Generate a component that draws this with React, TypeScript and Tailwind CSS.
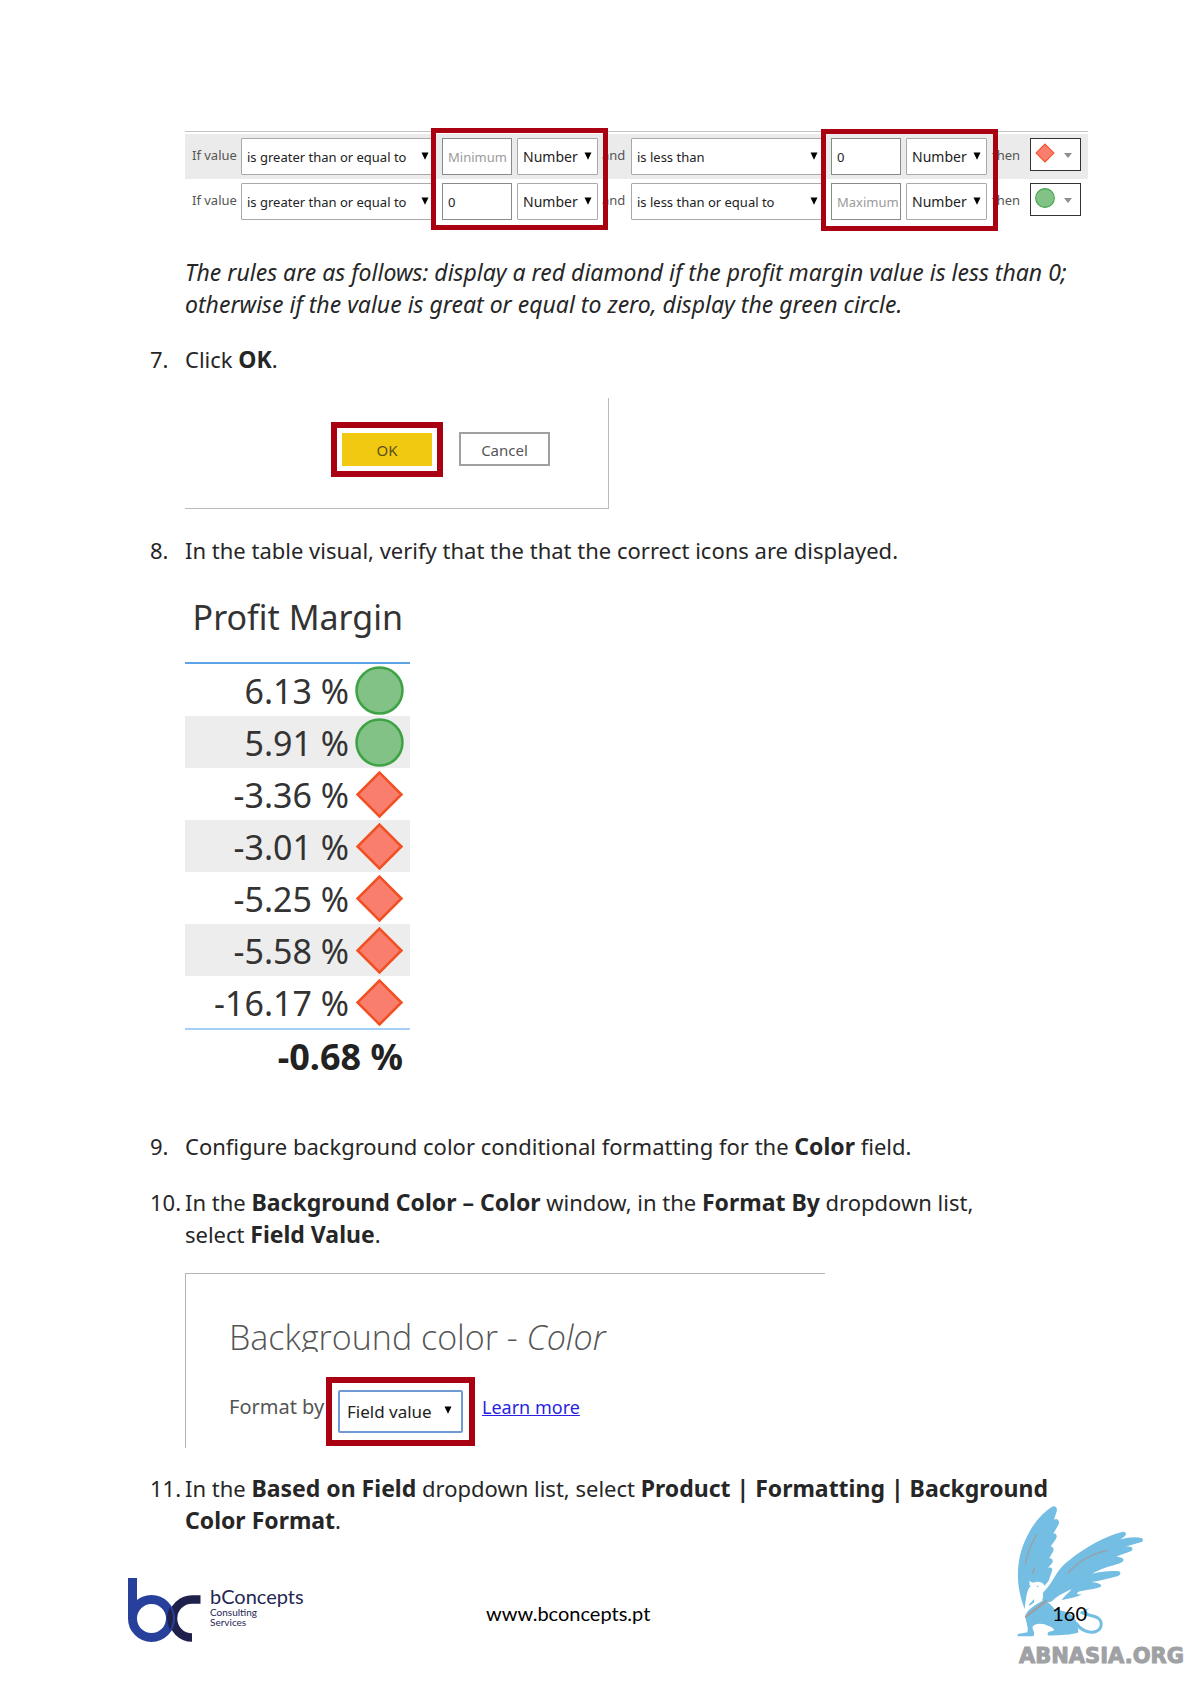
import React from "react";

const bodyFont = "font-['Noto_Sans','Open_Sans',sans-serif]";

function Arrow({ className }: { className: string }) {
  return (
    <svg viewBox="0 0 8 8" className={`pointer-events-none absolute h-2 w-2 ${className}`} aria-hidden="true">
      <path d="M0.5 0.5H7.5L4 7.8Z" fill="currentColor" />
    </svg>
  );
}

function Diamond({ className }: { className: string }) {
  return (
    <svg viewBox="0 0 48 48" className={className} aria-hidden="true">
      <path d="M24 2.5L45.5 24L24 45.5L2.5 24Z" fill="#fa7e6e" stroke="#f25022" strokeWidth="2.5" />
    </svg>
  );
}

function Circle({ className }: { className: string }) {
  return (
    <svg viewBox="0 0 48 48" className={className} aria-hidden="true">
      <circle cx="24" cy="24" r="22.5" fill="#82c287" stroke="#3fa346" strokeWidth="2.5" />
    </svg>
  );
}

function Picker({ label, value, className }: { label: string; value: string; className: string }) {
  return (
    <div className={`relative h-[37px] shrink-0 ${className}`}>
      <select
        aria-label={label}
        className="h-full w-full appearance-none rounded-[1px] border border-[#a9a9a9] bg-white pl-[5px] text-[#222]"
      >
        <option>{value}</option>
      </select>
      <Arrow className="top-[14px] right-[6px] text-black" />
    </div>
  );
}

type RuleProps = {
  low: string;
  high: string;
  upper: string;
  shade: string;
  icon: "diamond" | "circle";
};

function Rule({ low, high, upper, shade, icon }: RuleProps) {
  const box =
    "h-[37px] w-[70px] shrink-0 border border-[#8a8a8a] bg-white pl-[5px] text-[13px] text-[#222] placeholder:text-[#9a9a9a]";
  return (
    <div className={`flex h-[45px] items-start pt-1 pl-[7px] text-[13px] leading-8 text-[#555] ${shade}`}>
      <span className="w-[49px] shrink-0 pt-px whitespace-nowrap">If value</span>
      <Picker label="Lower comparison" value="is greater than or equal to" className="w-[194px]" />
      <input aria-label="Lower value" placeholder="Minimum" defaultValue={low} className={`ml-[7px] ${box}`} />
      <Picker label="Lower type" value="Number" className="ml-[5px] w-[81px] text-sm" />
      <span className="w-[33px] shrink-0 pt-px pl-1">and</span>
      <Picker label="Upper comparison" value={upper} className="w-[193px]" />
      <input aria-label="Upper value" placeholder="Maximum" defaultValue={high} className={`ml-[7px] ${box}`} />
      <Picker label="Upper type" value="Number" className="ml-[5px] w-[81px] text-sm" />
      <span className="w-[43px] shrink-0 pt-px pl-[5px]">then</span>
      <button
        aria-label={`Icon: ${icon}`}
        className="relative flex h-[33px] w-[51px] shrink-0 items-start border border-[#333] bg-white pt-1 pl-1"
      >
        {icon === "diamond" ? <Diamond className="h-5 w-5" /> : <Circle className="h-5 w-5" />}
        <svg viewBox="0 0 8 5" className="absolute top-[14px] right-2 h-[5px] w-2" aria-hidden="true">
          <path d="M0 0H8L4 5Z" fill="#8f8f8f" />
        </svg>
      </button>
    </div>
  );
}

function B({ children }: { children: React.ReactNode }) {
  return <b className="text-[23px]">{children}</b>;
}

function Step({ n, children }: { n: number; children: React.ReactNode }) {
  return (
    <div className="-ml-[35px] flex">
      <span className="w-[35px] shrink-0 whitespace-nowrap">{n}.</span>
      <p className="min-w-0">{children}</p>
    </div>
  );
}

const margins: { value: string; up: boolean }[] = [
  { value: "6.13 %", up: true },
  { value: "5.91 %", up: true },
  { value: "-3.36 %", up: false },
  { value: "-3.01 %", up: false },
  { value: "-5.25 %", up: false },
  { value: "-5.58 %", up: false },
  { value: "-16.17 %", up: false },
];

function Griffin() {
  return (
    <svg viewBox="51 45 400 405" className="h-[135px] w-[133px]" aria-hidden="true">
      <g fill="#74bee3">
        <path d="M74 360C58 320 48 270 57 215C68 150 108 82 158 52C167 48 174 57 170 68L162 92C170 86 181 94 176 106L160 134C168 130 174 140 168 150L152 172C160 172 163 180 159 188L148 208C156 207 161 213 157 221L142 240C151 231 160 236 156 247L146 276L134 290C128 277 112 276 100 281L87 276L92 291C80 302 78 330 74 360Z" />
        <path d="M130 310C165 275 165 245 210 212C255 175 320 140 370 128C380 127 381 138 374 142L362 151C385 144 410 143 426 147C434 152 429 160 420 160L376 173C390 171 401 175 398 182C394 190 366 194 350 203C365 204 374 209 371 215C367 224 335 229 312 238C300 243 286 249 277 254C306 246 340 244 357 247C366 251 362 260 352 262C327 269 300 276 274 279C291 280 307 285 304 292C300 299 267 301 238 308C221 317 241 318 248 316C225 327 205 329 186 333C190 324 209 310 215 300C190 312 170 322 156 337L140 342L76 381C80 365 100 350 127 336Z" />
        <path d="M76 383L142 340C151 344 157 352 165 362C187 366 220 368 232 405L236 430C218 438 183 439 145 440C141 435 143 429 150 428C160 426 166 425 160 420C155 412 145 412 134 406C118 403 103 404 98 414C96 423 105 429 102 435L101 442H53C51 435 56 434 64 434L82 430C87 419 78 401 76 383Z" />
        <path d="M104 329L86 348C91 354 99 341 110 335Z" />
      </g>
      <path d="M228 402C240 422 266 436 288 428C308 420 309 398 294 387C279 378 260 380 244 370" fill="none" stroke="#74bee3" strokeWidth="9" />
      <path d="M238 371L268 357L260 366L270 379Z" fill="#74bee3" />
      <path d="M90 281L100 283C111 277 127 281 135 294L127 291L130 299L120 297C120 308 125 318 130 325L103 341C101 326 108 313 102 302L91 299L97 293L88 287Z" fill="white" />
      <path d="M108 290L118 291L113 294Z" fill="#74bee3" />
      <g fill="none" stroke="#9b9fa5" strokeLinecap="round">
        <path d="M110 136C94 164 83 190 76 225" strokeWidth="4" />
        <path d="M104 237L98 252" strokeWidth="5" />
        <path d="M205 252C230 222 268 198 321 184" strokeWidth="4" />
        <path d="M78 383L138 337" strokeWidth="7" />
      </g>
    </svg>
  );
}

function Logo() {
  return (
    <div className="flex w-[356px] shrink-0 text-[#252653]">
      <svg viewBox="0 0 73 64" className="h-16 w-[73px] shrink-0" aria-hidden="true">
        <path d="M72.5 21.5H64A19 19 0 0 0 64 59.5" fill="none" stroke="#20204d" strokeWidth="8.5" />
        <path d="M4.5 0V41" stroke="#27409b" strokeWidth="9" />
        <circle cx="23.5" cy="40.5" r="19" fill="none" stroke="#27409b" strokeWidth="9" />
        <path d="M42 29Q48 39 42 52Q36 40 42 29Z" fill="#20204d" />
      </svg>
      <div className="pt-[7px] pl-[9px] font-['Lato',sans-serif]">
        <div className="text-xl leading-[22px]">bConcepts</div>
        <div className="text-[10px] leading-[10px]">
          Consulting
          <br />
          Services
        </div>
      </div>
    </div>
  );
}

export default function App() {
  return (
    <div className={`relative flex min-h-screen flex-col bg-white text-[22px] leading-8 text-[#262626] ${bodyFont}`}>
      <main className="flex-1 pt-[131px] pr-[100px] pl-[185px]">
        <section className="relative w-[903px] border-t border-[#c4c4c4] pt-[2px]">
          <Rule low="" high="0" upper="is less than" shade="bg-[#ebebeb]" icon="diamond" />
          <Rule low="0" high="" upper="is less than or equal to" shade="bg-white" icon="circle" />
          <div className="pointer-events-none absolute -top-1 left-[246px] h-[102px] w-[177px] border-[5px] border-[#a90012]" />
          <div className="pointer-events-none absolute -top-[3px] left-[636px] h-[102px] w-[177px] border-[5px] border-[#a90012]" />
        </section>

        <p className="mt-8 text-[23px] italic">
          The rules are as follows: display a red diamond if the profit margin value is less than 0;
          <br />
          otherwise if the value is great or equal to zero, display the green circle.
        </p>

        <div className="mt-[23px]">
          <Step n={7}>
            Click <B>OK</B>.
          </Step>
        </div>

        <section className="mt-[23px] flex h-[111px] w-[424px] items-start justify-end gap-4 border-r border-b border-[#bcbcbc] pt-6 pr-[58px] text-[15px]">
          <div className="border-[6px] border-[#a90012] p-[5px]">
            <button className="block h-[33px] w-[90px] bg-[#f0c910] text-[#5c5020]">OK</button>
          </div>
          <button className="mt-[10px] h-[34px] w-[91px] border-2 border-[#a0a0a0] text-[#555]">Cancel</button>
        </section>

        <div className="mt-[25px]">
          <Step n={8}>In the table visual, verify that the that the correct icons are displayed.</Step>
        </div>

        <table className="mt-[23px] w-[225px] border-collapse text-right text-[34px] text-[#333]">
          <thead>
            <tr className="h-[74px] border-b-2 border-[#5ba4e6]">
              <th className="pr-[7px] pb-[18px] font-normal whitespace-nowrap">Profit Margin</th>
            </tr>
          </thead>
          <tbody>
            {margins.map((m) => (
              <tr key={m.value} className="h-[52px] even:bg-[#ededed]">
                <td className="p-0">
                  <div className="flex h-[52px] items-center justify-end gap-[6px] pr-[6px]">
                    <span className="pt-[2px]">{m.value}</span>
                    {m.up ? <Circle className="h-[49px] w-[49px]" /> : <Diamond className="h-[49px] w-[49px]" />}
                  </div>
                </td>
              </tr>
            ))}
          </tbody>
          <tfoot>
            <tr className="h-[54px] border-t-2 border-[#a5d0f7] text-4xl leading-8 font-bold text-[#222]">
              <td className="pr-[7px] whitespace-nowrap">-0.68 %</td>
            </tr>
          </tfoot>
        </table>

        <div className="mt-[47px]">
          <Step n={9}>
            Configure background color conditional formatting for the <B>Color</B> field.
          </Step>
        </div>
        <div className="mt-6">
          <Step n={10}>
            In the <B>Background Color – Color</B> window, in the <B>Format By</B> dropdown list,
            <br />
            select <B>Field Value</B>.
          </Step>
        </div>

        <section className="mt-[23px] h-[175px] w-[640px] border-t border-l border-[#b5b5b5] pt-[42px] pl-[43px] text-[#555]">
          <h2 className="h-[36px] overflow-hidden font-['Open_Sans','Noto_Sans',sans-serif] text-[34px] leading-[42px] font-light">
            Background color - <i>Color</i>
          </h2>
          <div className="mt-[25px] flex items-start">
            <label htmlFor="format-by" className="w-[97px] shrink-0 pt-[14px] text-xl leading-8">
              Format by
            </label>
            <div className="border-[6px] border-[#a90012] px-[6px] py-[7px]">
              <div className="relative h-[43px] w-[125px]">
                <select
                  id="format-by"
                  className="h-full w-full appearance-none rounded-xs border-2 border-[#6f9ad3] bg-white pl-[7px] text-[17px] text-[#222]"
                >
                  <option>Field value</option>
                </select>
                <Arrow className="top-4 right-[11px] text-black" />
              </div>
            </div>
            <a href="#learn-more" className="pt-[14px] pl-[7px] text-lg leading-8 text-[#2a1fe0] underline">
              Learn more
            </a>
          </div>
        </section>

        <div className="mt-6">
          <Step n={11}>
            In the <B>Based on Field</B> dropdown list, select <B>Product | Formatting | Background</B>
            <br />
            <B>Color Format</B>.
          </Step>
        </div>
      </main>

      <div className="absolute right-1 bottom-[14px] flex w-[170px] flex-col">
        <Griffin />
        <span className="pt-[3px] pl-[2px] font-['DejaVu_Sans',sans-serif] text-[21px] leading-7 font-bold text-[#a0a1a4] [-webkit-text-stroke:1px_#a0a1a4]">
          ABNASIA.ORG
        </span>
      </div>

      <footer className="relative flex h-[106px] pr-[104px] pl-32 font-['Lato',sans-serif] text-xl leading-8 text-black">
        <Logo />
        <span className="pt-[19px] pl-[2px]">www.bconcepts.pt</span>
        <span className="ml-auto pt-[19px]">160</span>
      </footer>
    </div>
  );
}
